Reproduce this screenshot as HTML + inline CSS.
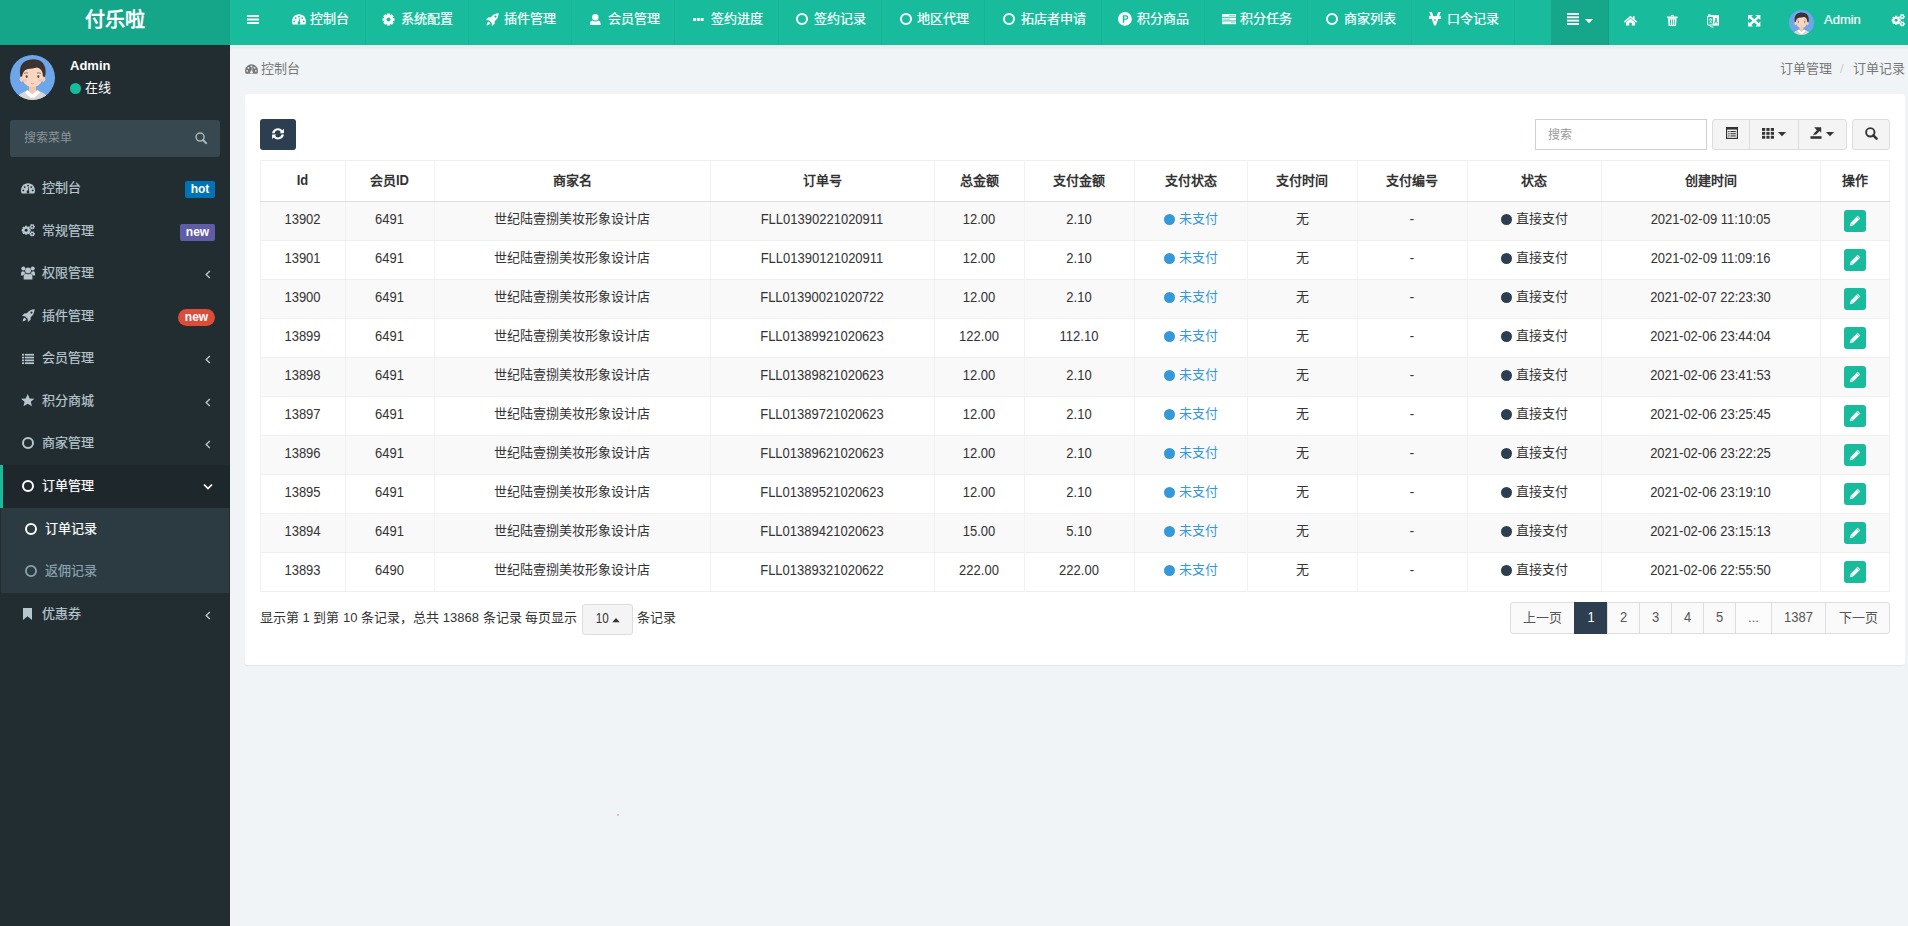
<!DOCTYPE html>
<html lang="zh-CN"><head><meta charset="utf-8"><style>
*{box-sizing:border-box;margin:0;padding:0}
html,body{width:1908px;height:926px;overflow:hidden}
body{font-family:"Liberation Sans",sans-serif;font-size:13px;color:#333;background:#f1f4f6;position:relative}
.abs{position:absolute}
svg.abs{overflow:visible}
.logo{left:0;top:0;width:230px;height:45px;color:#fff;font-size:20px;font-weight:bold;text-align:center;line-height:40px;letter-spacing:0}
.nsep{top:0;width:1px;height:45px;background:rgba(0,0,0,0.045)}
.nt{top:11px;font-size:13px;line-height:15px;color:#fff;white-space:nowrap;-webkit-text-stroke:0.2px #fff}
.st{font-size:13px;line-height:15px;color:#b8c7ce;white-space:nowrap;-webkit-text-stroke:0.2px currentColor}
.badge{height:17px;line-height:17px;font-size:12px;font-weight:bold;color:#fff;text-align:center}
.ct{font-size:13px;line-height:15px;white-space:nowrap}
.hl{left:260px;width:1630px;height:1px;background:#f0f0f0}
.vl{top:160px;width:1px;height:432px;background:#f2f2f2}
.cell{display:flex;align-items:center;justify-content:center;font-size:13px;color:#333;white-space:nowrap}
.dot{display:inline-block;width:11px;height:11px;border-radius:50%;margin-right:4px}
.sy{display:inline-block;transform:scaleY(1.08);transform-origin:50% 81%}
.syh{position:relative;top:1.2px}
.pg{display:flex;align-items:center;justify-content:center;font-size:13px;color:#555}
</style></head><body>
<div class="abs" style="left:0;top:0;width:230px;height:45px;background:#15a589"></div>
<div class="abs logo">付乐啦</div>
<div class="abs" style="left:230px;top:0;width:1678px;height:45px;background:#18bc9c"></div>
<svg class="abs" style="left:247px;top:15px;" width="12" height="9" viewBox="0 0 12 9"><g fill="#fff"><rect x="0" y="0" width="12" height="2"/><rect x="0" y="3.5" width="12" height="2"/><rect x="0" y="7" width="12" height="2"/></g></svg>
<div class="abs nsep" style="left:365px"></div>
<span class="abs nt" style="left:310px">控制台</span>
<svg class="abs" style="left:292px;top:14.3px;" width="14" height="14" viewBox="0 0 14 14"><path d="M.8 10.6 A7 7 0 1 1 13.2 10.6Z" fill="#fff"/><g fill="#18bc9c"><circle cx="2.3" cy="7.4" r=".95"/><circle cx="3.7" cy="4.1" r=".95"/><circle cx="7" cy="2.6" r=".95"/><circle cx="10.3" cy="4.1" r=".95"/><circle cx="11.7" cy="7.4" r=".95"/><circle cx="7" cy="9" r="1.4"/><path d="M6.4 9 L7.6 3.8 L8.1 3.9 L7.6 9.2Z"/></g></svg>
<div class="abs nsep" style="left:468px"></div>
<span class="abs nt" style="left:401px">系统配置</span>
<svg class="abs" style="left:382px;top:13px;" width="13" height="13" viewBox="0 0 14 14"><path d="M13.44 5.56 L13.44 8.44 L11.47 9.00 L11.58 8.75 L12.57 10.54 L10.54 12.57 L8.75 11.58 L9.00 11.47 L8.44 13.44 L5.56 13.44 L5.00 11.47 L5.25 11.58 L3.46 12.57 L1.43 10.54 L2.42 8.75 L2.53 9.00 L0.56 8.44 L0.56 5.56 L2.53 5.00 L2.42 5.25 L1.43 3.46 L3.46 1.43 L5.25 2.42 L5.00 2.53 L5.56 0.56 L8.44 0.56 L9.00 2.53 L8.75 2.42 L10.54 1.43 L12.57 3.46 L11.58 5.25 L11.47 5.00 Z" fill="#fff"/><circle cx="7" cy="7" r="2.1" fill="#18bc9c"/></svg>
<div class="abs nsep" style="left:571px"></div>
<span class="abs nt" style="left:504px">插件管理</span>
<svg class="abs" style="left:486px;top:13px;" width="13" height="13" viewBox="0 0 14 14"><path d="M13.6 .4 Q8.6 .4 5.2 4.6 L2.4 4.8 L0 7.6 L3.2 7.8 L6.2 10.8 L6.4 14 L9.2 11.6 L9.4 8.8 Q13.6 5.4 13.6 .4Z" fill="#fff"/><circle cx="10.2" cy="3.8" r="1.2" fill="#18bc9c"/><path d="M2.6 9.2 L4.8 11.4 Q3.6 13.2 .6 13.4 Q.8 10.4 2.6 9.2Z" fill="#fff"/></svg>
<div class="abs nsep" style="left:674px"></div>
<span class="abs nt" style="left:607.5px">会员管理</span>
<svg class="abs" style="left:590.4px;top:13.8px;" width="10.6" height="10.9" viewBox="0 0 10.6 10.9"><circle cx="5.3" cy="3.3" r="3.2" fill="#fff"/><path d="M0 10.9 V9.6 Q0 6.9 2.3 6.5 Q5.3 8.4 8.3 6.5 Q10.6 6.9 10.6 9.6 V10.9Z" fill="#fff"/></svg>
<div class="abs nsep" style="left:778px"></div>
<span class="abs nt" style="left:710.8px">签约进度</span>
<svg class="abs" style="left:693px;top:17.5px;" width="10.6" height="3" viewBox="0 0 10.6 3"><g fill="#fff"><rect x="0" y="0" width="3" height="3" rx=".5"/><rect x="3.8" y="0" width="3" height="3" rx=".5"/><rect x="7.6" y="0" width="3" height="3" rx=".5"/></g></svg>
<div class="abs nsep" style="left:881px"></div>
<span class="abs nt" style="left:813.8px">签约记录</span>
<svg class="abs" style="left:796px;top:12.7px;" width="12" height="12" viewBox="0 0 12 12"><circle cx="6" cy="6" r="5.0" stroke="#fff" stroke-width="2" fill="none"/></svg>
<div class="abs nsep" style="left:984px"></div>
<span class="abs nt" style="left:917.3px">地区代理</span>
<svg class="abs" style="left:899.7px;top:12.7px;" width="12" height="12" viewBox="0 0 12 12"><circle cx="6" cy="6" r="5.0" stroke="#fff" stroke-width="2" fill="none"/></svg>
<div class="abs nsep" style="left:1101px"></div>
<span class="abs nt" style="left:1020.8px">拓店者申请</span>
<svg class="abs" style="left:1003px;top:12.7px;" width="12" height="12" viewBox="0 0 12 12"><circle cx="6" cy="6" r="5.0" stroke="#fff" stroke-width="2" fill="none"/></svg>
<div class="abs nsep" style="left:1204px"></div>
<span class="abs nt" style="left:1136.7px">积分商品</span>
<svg class="abs" style="left:1118.2px;top:12.4px;" width="13.8" height="13.8" viewBox="0.5 1 13 13"><circle cx="7" cy="7.5" r="6.5" fill="#fff"/><path d="M5 4 H8 A2.2 2.2 0 0 1 8 8.4 H6.4 V11.2 H5Z M6.4 5.2 V7.2 H7.9 A1 1 0 0 0 7.9 5.2Z" fill="#18bc9c" fill-rule="evenodd"/></svg>
<div class="abs nsep" style="left:1307px"></div>
<span class="abs nt" style="left:1240px">积分任务</span>
<svg class="abs" style="left:1221.5px;top:13.8px;" width="14" height="10.2" viewBox="0 0 14 10.2"><g fill="#fff"><rect x="0" y="0" width="14" height="2.8"/><rect x="0" y="3.7" width="14" height="2.8"/><rect x="0" y="7.4" width="14" height="2.8"/></g><g fill="#18bc9c" opacity=".55"><rect x="7" y="0.9" width="6" height="1"/><rect x="1" y="4.6" width="7" height="1"/><rect x="9" y="8.3" width="4" height="1"/></g></svg>
<div class="abs nsep" style="left:1411px"></div>
<span class="abs nt" style="left:1344px">商家列表</span>
<svg class="abs" style="left:1326px;top:12.7px;" width="12" height="12" viewBox="0 0 12 12"><circle cx="6" cy="6" r="5.0" stroke="#fff" stroke-width="2" fill="none"/></svg>
<div class="abs nsep" style="left:1514px"></div>
<span class="abs nt" style="left:1447px">口令记录</span>
<svg class="abs" style="left:1429.2px;top:12.3px;" width="11.9" height="13.4" viewBox="0 0 11.9 13.4"><path d="M.3 0 H2.9 L6 9 L9.1 0 H11.7 L6.9 13.4 H5.1Z" fill="#fff"/><rect x="0" y="4.2" width="11.9" height="2.8" fill="#fff"/><circle cx="6" cy="8.2" r=".6" fill="#18bc9c"/></svg>
<div class="abs" style="left:1551px;top:0;width:58px;height:45px;background:#16a68a"></div>
<div class="abs nsep" style="left:1608px"></div>
<svg class="abs" style="left:1566px;top:13px;" width="14" height="12" viewBox="0 0 14 14"><g fill="#fff"><rect x="0" y="0" width="14" height="2.2"/><rect x="0" y="3.9" width="14" height="2.2"/><rect x="0" y="7.8" width="14" height="2.2"/><rect x="0" y="11.7" width="14" height="2.2"/></g></svg>
<svg class="abs" style="left:1585px;top:19px;" width="8" height="4.3" viewBox="0 0 8 4.3"><path d="M0 0 H8 L4 4.3Z" fill="#fff"/></svg>
<svg class="abs" style="left:1624px;top:15px;" width="13" height="10.5" viewBox="0 0 13 10.5"><path d="M6.5 .8 L-.2 6.6 L.8 7.7 L6.5 2.8 L12.2 7.7 L13.2 6.6 L10.6 4.4 V1.2 H8.9 V2.9Z" fill="#fff"/><path d="M1.9 7.4 L6.5 3.6 L11.1 7.4 V10.5 H7.8 V7.8 H5.2 V10.5 H1.9Z" fill="#fff"/></svg>
<svg class="abs" style="left:1667px;top:15px;" width="10.6" height="11" viewBox="0 0 10.6 11"><path d="M3.9 1.3 Q4.2 .2 5.3 .2 Q6.4 .2 6.7 1.3" stroke="#fff" stroke-width="1.1" fill="none"/><rect x="0" y="1.5" width="10.6" height="1.6" fill="#fff"/><path d="M1 3.3 H9.6 L9 10.9 H1.6Z" fill="#fff"/><g fill="#18bc9c"><rect x="3" y="4.5" width=".9" height="5.3"/><rect x="4.9" y="4.5" width=".9" height="5.3"/><rect x="6.8" y="4.5" width=".9" height="5.3"/></g></svg>
<svg class="abs" style="left:1706.8px;top:13.7px;" width="12.1" height="13.3" viewBox="0 0 12.1 13.3"><path d="M.6 2.4 H6.4 V11 H.6Z" fill="none" stroke="#fff" stroke-width="1"/><path d="M1.2 0 L6.6 1.4 V2.4 H1.2Z" fill="#fff"/><path d="M6 1.2 H12 V11.6 H6Z" fill="#fff"/><path d="M7.6 9.6 L9 4 L10.4 9.6 M8.1 7.8 H9.9" stroke="#18bc9c" stroke-width=".9" fill="none"/><path d="M1.8 5.2 H5.2 M3.5 4.2 V5.2 M2.2 9.4 Q4.6 7.6 4.6 5.2 M2.6 6.4 Q3.6 8.6 5.4 9.4" stroke="#fff" stroke-width=".7" fill="none"/><path d="M2.6 11.4 Q3.6 13.2 6.4 13.2" stroke="#fff" stroke-width="1" fill="none"/></svg>
<svg class="abs" style="left:1747.5px;top:14.6px;" width="12.4" height="11.5" viewBox="0 0 12.4 11.5"><g fill="#fff"><path d="M0 0 H5 L0 5Z"/><path d="M12.4 0 V5 L7.4 0Z"/><path d="M0 11.5 V6.5 L5 11.5Z"/><path d="M12.4 11.5 H7.4 L12.4 6.5Z"/></g><path d="M1.6 1.6 L10.8 9.9 M10.8 1.6 L1.6 9.9" stroke="#fff" stroke-width="2.4"/></svg>
<svg class="abs" style="left:1789px;top:10px;" width="25" height="25" viewBox="0 0 100 100"><defs><clipPath id="ac1789"><circle cx="50" cy="50" r="50"/></clipPath></defs><circle cx="50" cy="50" r="50" fill="#6ea6ea"/><g clip-path="url(#ac1789)"><path d="M14 100 Q18 84 40 79 L60 79 Q82 84 86 100Z" fill="#dbd6d1"/><path d="M38 78 L50 88 L62 78 L67 84 L54 95 L46 95 L33 84Z" fill="#fff"/><rect x="42" y="64" width="16" height="17" fill="#f1c7aa"/><path d="M43 78 L50 86 L57 78Z" fill="#f1c7aa"/><ellipse cx="26" cy="54" rx="4.5" ry="6" fill="#f4cfb4"/><ellipse cx="74" cy="54" rx="4.5" ry="6" fill="#f4cfb4"/><path d="M26 40 Q26 70 50 71 Q74 70 74 40 Q74 26 50 26 Q26 26 26 40Z" fill="#f7d7c0"/><path d="M23 48 Q17 14 46 10 Q76 7 79 34 Q80 42 77 49 L73 47 Q73 31 60 28 Q50 31 40 31 Q29 33 27 48Z" fill="#3b3331"/><path d="M31 41 Q35 39 40 40" stroke="#6b5a4d" stroke-width="1.6" fill="none"/><path d="M60 40 Q65 39 69 41" stroke="#6b5a4d" stroke-width="1.6" fill="none"/><ellipse cx="37" cy="48" rx="2.3" ry="3" fill="#5b4636"/><ellipse cx="63" cy="48" rx="2.3" ry="3" fill="#5b4636"/><ellipse cx="33" cy="56" rx="5" ry="2.8" fill="#f3b5ab" opacity=".6"/><ellipse cx="67" cy="56" rx="5" ry="2.8" fill="#f3b5ab" opacity=".6"/><path d="M47 63 Q50 65 53 63" stroke="#e7928a" stroke-width="1.8" fill="none"/></g></svg>
<span class="abs nt" style="left:1824px;top:12px">Admin</span>
<svg class="abs" style="left:1891px;top:14px;" width="14.4" height="13" viewBox="0 0 14.4 14"><path d="M9.88 5.73 L9.88 7.87 L8.41 8.23 L8.42 8.20 L9.21 9.50 L7.70 11.01 L6.40 10.22 L6.43 10.21 L6.07 11.68 L3.93 11.68 L3.57 10.21 L3.60 10.22 L2.30 11.01 L0.79 9.50 L1.58 8.20 L1.59 8.23 L0.12 7.87 L0.12 5.73 L1.59 5.37 L1.58 5.40 L0.79 4.10 L2.30 2.59 L3.60 3.38 L3.57 3.39 L3.93 1.92 L6.07 1.92 L6.43 3.39 L6.40 3.38 L7.70 2.59 L9.21 4.10 L8.42 5.40 L8.41 5.37 Z" fill="#fff"/><circle cx="5.0" cy="6.8" r="1.6" fill="#18bc9c"/><path d="M14.38 2.05 L14.38 3.75 L13.28 3.80 L13.17 3.99 L13.68 4.97 L12.20 5.82 L11.61 4.90 L11.39 4.90 L10.80 5.82 L9.32 4.97 L9.83 3.99 L9.72 3.80 L8.62 3.75 L8.62 2.05 L9.72 2.00 L9.83 1.81 L9.32 0.83 L10.80 -0.02 L11.39 0.90 L11.61 0.90 L12.20 -0.02 L13.68 0.83 L13.17 1.81 L13.28 2.00 Z" fill="#fff"/><circle cx="11.5" cy="2.9" r="0.9" fill="#18bc9c"/><path d="M14.38 9.75 L14.38 11.45 L13.28 11.50 L13.17 11.69 L13.68 12.67 L12.20 13.52 L11.61 12.60 L11.39 12.60 L10.80 13.52 L9.32 12.67 L9.83 11.69 L9.72 11.50 L8.62 11.45 L8.62 9.75 L9.72 9.70 L9.83 9.51 L9.32 8.53 L10.80 7.68 L11.39 8.60 L11.61 8.60 L12.20 7.68 L13.68 8.53 L13.17 9.51 L13.28 9.70 Z" fill="#fff"/><circle cx="11.5" cy="10.6" r="0.9" fill="#18bc9c"/></svg>
<div class="abs" style="left:0;top:45px;width:230px;height:881px;background:#222d32"></div>
<svg class="abs" style="left:10px;top:55px;" width="45" height="45" viewBox="0 0 100 100"><defs><clipPath id="ac10"><circle cx="50" cy="50" r="50"/></clipPath></defs><circle cx="50" cy="50" r="50" fill="#6ea6ea"/><g clip-path="url(#ac10)"><path d="M14 100 Q18 84 40 79 L60 79 Q82 84 86 100Z" fill="#dbd6d1"/><path d="M38 78 L50 88 L62 78 L67 84 L54 95 L46 95 L33 84Z" fill="#fff"/><rect x="42" y="64" width="16" height="17" fill="#f1c7aa"/><path d="M43 78 L50 86 L57 78Z" fill="#f1c7aa"/><ellipse cx="26" cy="54" rx="4.5" ry="6" fill="#f4cfb4"/><ellipse cx="74" cy="54" rx="4.5" ry="6" fill="#f4cfb4"/><path d="M26 40 Q26 70 50 71 Q74 70 74 40 Q74 26 50 26 Q26 26 26 40Z" fill="#f7d7c0"/><path d="M23 48 Q17 14 46 10 Q76 7 79 34 Q80 42 77 49 L73 47 Q73 31 60 28 Q50 31 40 31 Q29 33 27 48Z" fill="#3b3331"/><path d="M31 41 Q35 39 40 40" stroke="#6b5a4d" stroke-width="1.6" fill="none"/><path d="M60 40 Q65 39 69 41" stroke="#6b5a4d" stroke-width="1.6" fill="none"/><ellipse cx="37" cy="48" rx="2.3" ry="3" fill="#5b4636"/><ellipse cx="63" cy="48" rx="2.3" ry="3" fill="#5b4636"/><ellipse cx="33" cy="56" rx="5" ry="2.8" fill="#f3b5ab" opacity=".6"/><ellipse cx="67" cy="56" rx="5" ry="2.8" fill="#f3b5ab" opacity=".6"/><path d="M47 63 Q50 65 53 63" stroke="#e7928a" stroke-width="1.8" fill="none"/></g></svg>
<span class="abs" style="left:70px;top:58px;font-size:13px;font-weight:bold;color:#fff;line-height:16px">Admin</span>
<div class="abs" style="left:70px;top:83px;width:11px;height:11px;border-radius:50%;background:#18bc9c"></div>
<span class="abs" style="left:85px;top:80px;font-size:13px;color:#fff;line-height:15px">在线</span>
<div class="abs" style="left:10px;top:120px;width:210px;height:36.5px;background:#374850;border-radius:3px"></div>
<span class="abs" style="left:24px;top:131px;font-size:12px;color:#8a9499;line-height:14px">搜索菜单</span>
<svg class="abs" style="left:194.5px;top:132px;" width="12" height="12" viewBox="0 0 12.5 12.5"><circle cx="5.3" cy="5.3" r="4.2" stroke="#b0b8bc" stroke-width="1.5" fill="none"/><path d="M8.3 8.3 L11.6 11.6" stroke="#b0b8bc" stroke-width="2.1" stroke-linecap="round"/></svg>
<span class="abs st" style="left:42px;top:180px">控制台</span>
<svg class="abs" style="left:21.2px;top:182.6px;" width="14" height="14" viewBox="0 0 14 14"><path d="M.8 10.6 A7 7 0 1 1 13.2 10.6Z" fill="#b8c7ce"/><g fill="#222d32"><circle cx="2.3" cy="7.4" r=".95"/><circle cx="3.7" cy="4.1" r=".95"/><circle cx="7" cy="2.6" r=".95"/><circle cx="10.3" cy="4.1" r=".95"/><circle cx="11.7" cy="7.4" r=".95"/><circle cx="7" cy="9" r="1.4"/><path d="M6.4 9 L7.6 3.8 L8.1 3.9 L7.6 9.2Z"/></g></svg>
<span class="abs badge" style="left:185px;top:181px;width:30px;background:#0073b7;border-radius:2px">hot</span>
<span class="abs st" style="left:42px;top:222.6px">常规管理</span>
<svg class="abs" style="left:21px;top:223.6px;" width="14.4" height="13" viewBox="0 0 14.4 14"><path d="M9.88 5.73 L9.88 7.87 L8.41 8.23 L8.42 8.20 L9.21 9.50 L7.70 11.01 L6.40 10.22 L6.43 10.21 L6.07 11.68 L3.93 11.68 L3.57 10.21 L3.60 10.22 L2.30 11.01 L0.79 9.50 L1.58 8.20 L1.59 8.23 L0.12 7.87 L0.12 5.73 L1.59 5.37 L1.58 5.40 L0.79 4.10 L2.30 2.59 L3.60 3.38 L3.57 3.39 L3.93 1.92 L6.07 1.92 L6.43 3.39 L6.40 3.38 L7.70 2.59 L9.21 4.10 L8.42 5.40 L8.41 5.37 Z" fill="#b8c7ce"/><circle cx="5.0" cy="6.8" r="1.6" fill="#222d32"/><path d="M14.38 2.05 L14.38 3.75 L13.28 3.80 L13.17 3.99 L13.68 4.97 L12.20 5.82 L11.61 4.90 L11.39 4.90 L10.80 5.82 L9.32 4.97 L9.83 3.99 L9.72 3.80 L8.62 3.75 L8.62 2.05 L9.72 2.00 L9.83 1.81 L9.32 0.83 L10.80 -0.02 L11.39 0.90 L11.61 0.90 L12.20 -0.02 L13.68 0.83 L13.17 1.81 L13.28 2.00 Z" fill="#b8c7ce"/><circle cx="11.5" cy="2.9" r="0.9" fill="#222d32"/><path d="M14.38 9.75 L14.38 11.45 L13.28 11.50 L13.17 11.69 L13.68 12.67 L12.20 13.52 L11.61 12.60 L11.39 12.60 L10.80 13.52 L9.32 12.67 L9.83 11.69 L9.72 11.50 L8.62 11.45 L8.62 9.75 L9.72 9.70 L9.83 9.51 L9.32 8.53 L10.80 7.68 L11.39 8.60 L11.61 8.60 L12.20 7.68 L13.68 8.53 L13.17 9.51 L13.28 9.70 Z" fill="#b8c7ce"/><circle cx="11.5" cy="10.6" r="0.9" fill="#222d32"/></svg>
<span class="abs badge" style="left:180px;top:224.1px;width:35px;background:#605ca8;border-radius:2px">new</span>
<span class="abs st" style="left:42px;top:265.1px">权限管理</span>
<svg class="abs" style="left:20.7px;top:265.5px;" width="14.1" height="13.5" viewBox="0 0 14 13.5"><g fill="#b8c7ce"><circle cx="7" cy="4.4" r="2.9"/><path d="M2.6 13.5 V11 Q2.6 7.8 5.4 7.8 Q7 8.8 8.6 7.8 Q11.4 7.8 11.4 11 V13.5Z"/><circle cx="2.3" cy="2.4" r="2"/><path d="M0 9.6 V7.4 Q0 5.2 1.6 5.2 Q2.4 5.8 3.4 5.4 Q3.6 7 4.6 7.6 Q2.6 8 2.2 9.6Z"/><circle cx="11.7" cy="2.4" r="2"/><path d="M14 9.6 V7.4 Q14 5.2 12.4 5.2 Q11.6 5.8 10.6 5.4 Q10.4 7 9.4 7.6 Q11.4 8 11.8 9.6Z"/></g></svg>
<svg class="abs" style="left:205px;top:269.9px;" width="6" height="9" viewBox="0 0 6 9"><path d="M4.8 1 L1.2 4.5 L4.8 8" stroke="#b8c7ce" stroke-width="1.4" fill="none"/></svg>
<span class="abs st" style="left:42px;top:307.7px">插件管理</span>
<svg class="abs" style="left:21.5px;top:309.2px;" width="13" height="13" viewBox="0 0 14 14"><path d="M13.6 .4 Q8.6 .4 5.2 4.6 L2.4 4.8 L0 7.6 L3.2 7.8 L6.2 10.8 L6.4 14 L9.2 11.6 L9.4 8.8 Q13.6 5.4 13.6 .4Z" fill="#b8c7ce"/><circle cx="10.2" cy="3.8" r="1.2" fill="#222d32"/><path d="M2.6 9.2 L4.8 11.4 Q3.6 13.2 .6 13.4 Q.8 10.4 2.6 9.2Z" fill="#b8c7ce"/></svg>
<span class="abs badge" style="left:178px;top:309.2px;width:37px;background:#dd4b39;border-radius:9px">new</span>
<span class="abs st" style="left:42px;top:350.3px">会员管理</span>
<svg class="abs" style="left:21px;top:353.3px;" width="14" height="12" viewBox="0 0 14 14"><g fill="#b8c7ce"><rect x="0" y="1" width="2.4" height="2"/><rect x="3.4" y="1" width="10.6" height="2"/><rect x="0" y="4.3" width="2.4" height="2"/><rect x="3.4" y="4.3" width="10.6" height="2"/><rect x="0" y="7.6" width="2.4" height="2"/><rect x="3.4" y="7.6" width="10.6" height="2"/><rect x="0" y="10.9" width="2.4" height="2"/><rect x="3.4" y="10.9" width="10.6" height="2"/></g></svg>
<svg class="abs" style="left:205px;top:355.1px;" width="6" height="9" viewBox="0 0 6 9"><path d="M4.8 1 L1.2 4.5 L4.8 8" stroke="#b8c7ce" stroke-width="1.4" fill="none"/></svg>
<span class="abs st" style="left:42px;top:392.9px">积分商城</span>
<svg preserveAspectRatio="none" class="abs" style="left:21.3px;top:393.8px;" width="13.4" height="12.3" viewBox="0.5 0.5 13 12.3"><path d="M7 .5 L8.9 4.9 L13.5 5.2 L10 8.2 L11.1 12.8 L7 10.3 L2.9 12.8 L4 8.2 L.5 5.2 L5.1 4.9Z" fill="#b8c7ce"/></svg>
<svg class="abs" style="left:205px;top:397.7px;" width="6" height="9" viewBox="0 0 6 9"><path d="M4.8 1 L1.2 4.5 L4.8 8" stroke="#b8c7ce" stroke-width="1.4" fill="none"/></svg>
<span class="abs st" style="left:42px;top:435.4px">商家管理</span>
<svg class="abs" style="left:22px;top:437.4px;" width="12" height="12" viewBox="0 0 12 12"><circle cx="6" cy="6" r="5.0" stroke="#b8c7ce" stroke-width="2" fill="none"/></svg>
<svg class="abs" style="left:205px;top:440.2px;" width="6" height="9" viewBox="0 0 6 9"><path d="M4.8 1 L1.2 4.5 L4.8 8" stroke="#b8c7ce" stroke-width="1.4" fill="none"/></svg>
<div class="abs" style="left:0;top:464.5px;width:230px;height:43px;background:#1e282c"></div>
<div class="abs" style="left:0;top:464.5px;width:3px;height:43px;background:#18bc9c"></div>
<span class="abs st" style="left:42px;top:478px;color:#fff">订单管理</span>
<svg class="abs" style="left:22px;top:479.5px;" width="12" height="12" viewBox="0 0 12 12"><circle cx="6" cy="6" r="5.0" stroke="#fff" stroke-width="2" fill="none"/></svg>
<svg class="abs" style="left:203px;top:483px;" width="10" height="7" viewBox="0 0 10 7"><path d="M1 1.5 L5 5.5 L9 1.5" stroke="#fff" stroke-width="1.7" fill="none"/></svg>
<div class="abs" style="left:1px;top:507.5px;width:228px;height:85px;background:#2c3b41"></div>
<span class="abs st" style="left:45px;top:521px;color:#fff">订单记录</span>
<svg class="abs" style="left:25px;top:522.5px;" width="12" height="12" viewBox="0 0 12 12"><circle cx="6" cy="6" r="5.0" stroke="#fff" stroke-width="2" fill="none"/></svg>
<span class="abs st" style="left:45px;top:563px;color:#8aa4af">返佣记录</span>
<svg class="abs" style="left:25px;top:564.5px;" width="12" height="12" viewBox="0 0 12 12"><circle cx="6" cy="6" r="5.1" stroke="#8aa4af" stroke-width="1.8" fill="none"/></svg>
<span class="abs st" style="left:42px;top:606px">优惠券</span>
<svg class="abs" style="left:23px;top:608px;" width="9" height="12" viewBox="0 0 9 12"><path d="M0 0 H9 V12 L4.5 8.3 L0 12Z" fill="#b8c7ce"/></svg>
<svg class="abs" style="left:205px;top:611.3px;" width="6" height="9" viewBox="0 0 6 9"><path d="M4.8 1 L1.2 4.5 L4.8 8" stroke="#b8c7ce" stroke-width="1.4" fill="none"/></svg>
<div class="abs" style="left:230px;top:45px;width:1678px;height:881px;background:#f1f4f6"></div>
<div class="abs" style="left:230px;top:45px;width:1678px;height:5px;background:linear-gradient(rgba(0,0,0,0.05),rgba(0,0,0,0))"></div>
<svg class="abs" style="left:245px;top:63.8px;" width="13" height="13" viewBox="0 0 14 14"><path d="M.8 10.6 A7 7 0 1 1 13.2 10.6Z" fill="#777"/><g fill="#f1f4f6"><circle cx="2.3" cy="7.4" r=".95"/><circle cx="3.7" cy="4.1" r=".95"/><circle cx="7" cy="2.6" r=".95"/><circle cx="10.3" cy="4.1" r=".95"/><circle cx="11.7" cy="7.4" r=".95"/><circle cx="7" cy="9" r="1.4"/><path d="M6.4 9 L7.6 3.8 L8.1 3.9 L7.6 9.2Z"/></g></svg>
<span class="abs ct" style="left:261px;top:61px;color:#777">控制台</span>
<span class="abs ct" style="left:1780px;top:61px;color:#777">订单管理</span>
<span class="abs ct" style="left:1840px;top:61px;color:#ccc">/</span>
<span class="abs ct" style="left:1853px;top:61px;color:#777">订单记录</span>
<div class="abs" style="left:245px;top:94px;width:1660px;height:571px;background:#fff;border-radius:3px;box-shadow:0 1px 1px rgba(0,0,0,0.06)"></div>
<div class="abs" style="left:260px;top:119px;width:36px;height:31px;background:#2c3e50;border-radius:3px"></div>
<svg class="abs" style="left:272.3px;top:127.7px;" width="12" height="11.7" viewBox="0 0 12 11.7"><path d="M0.1 5.3 A5.9 5.9 0 0 1 10.3 2.3 L11.9 0.8 V5.3 H7.5 L8.9 3.9 A3.4 3.4 0 0 0 2.6 5.3Z" fill="#fff"/><path d="M0.1 5.3 A5.9 5.9 0 0 1 10.3 2.3 L11.9 0.8 V5.3 H7.5 L8.9 3.9 A3.4 3.4 0 0 0 2.6 5.3Z" fill="#fff" transform="rotate(180 6 5.85)"/></svg>
<div class="abs" style="left:1535px;top:119px;width:172px;height:31px;border:1px solid #ccd0d6;background:#fff"></div>
<span class="abs" style="left:1548px;top:127.5px;font-size:12px;line-height:14px;color:#999">搜索</span>
<div class="abs" style="left:1712px;top:119px;width:135px;height:31px;border:1px solid #ddd;background:#f4f4f4;border-radius:3px"></div>
<div class="abs" style="left:1749px;top:119px;width:1px;height:31px;background:#ddd"></div>
<div class="abs" style="left:1798px;top:119px;width:1px;height:31px;background:#ddd"></div>
<div class="abs" style="left:1852px;top:119px;width:38px;height:31px;border:1px solid #ddd;background:#f4f4f4;border-radius:3px"></div>
<svg class="abs" style="left:1726px;top:127px;" width="12" height="12" viewBox="0 0 12 12"><rect x=".6" y=".6" width="10.8" height="10.8" fill="none" stroke="#333" stroke-width="1.2"/><rect x=".6" y=".6" width="10.8" height="2" fill="#333"/><g fill="#333"><rect x="2.2" y="4" width="1.4" height="1.1"/><rect x="4.4" y="4" width="5.4" height="1.1"/><rect x="2.2" y="6.2" width="1.4" height="1.1"/><rect x="4.4" y="6.2" width="5.4" height="1.1"/><rect x="2.2" y="8.4" width="1.4" height="1.1"/><rect x="4.4" y="8.4" width="5.4" height="1.1"/></g></svg>
<svg class="abs" style="left:1762px;top:128px;" width="12.2" height="10.8" viewBox="0 0 12.2 10.8"><g fill="#333"><rect x="0.0" y="0.0" width="3.2" height="2.9"/><rect x="0.0" y="3.9" width="3.2" height="2.9"/><rect x="0.0" y="7.8" width="3.2" height="2.9"/><rect x="4.4" y="0.0" width="3.2" height="2.9"/><rect x="4.4" y="3.9" width="3.2" height="2.9"/><rect x="4.4" y="7.8" width="3.2" height="2.9"/><rect x="8.8" y="0.0" width="3.2" height="2.9"/><rect x="8.8" y="3.9" width="3.2" height="2.9"/><rect x="8.8" y="7.8" width="3.2" height="2.9"/></g></svg>
<svg class="abs" style="left:1778px;top:131.8px;" width="8" height="4.3" viewBox="0 0 8 4.3"><path d="M0 0 H8 L4 4.3Z" fill="#333"/></svg>
<svg class="abs" style="left:1810.4px;top:127px;" width="12" height="12" viewBox="0 0 12 12"><rect x=".5" y="9.2" width="11" height="2.6" fill="#333"/><path d="M5.2 .3 H10.6 V5.7 L9 4.1 L5.6 7.5 Q4.3 7.3 2.4 8.6 Q3.3 5.7 6.3 3.2 L3.6 .3Z" fill="#333" transform="translate(.6 0)"/></svg>
<svg class="abs" style="left:1826.2px;top:131.8px;" width="8" height="4.3" viewBox="0 0 8 4.3"><path d="M0 0 H8 L4 4.3Z" fill="#333"/></svg>
<svg class="abs" style="left:1865px;top:127px;" width="12.5" height="12.5" viewBox="0 0 12.5 12.5"><circle cx="5.3" cy="5.3" r="4.2" stroke="#333" stroke-width="1.9" fill="none"/><path d="M8.3 8.3 L11.6 11.6" stroke="#333" stroke-width="2.5" stroke-linecap="round"/></svg>
<div class="abs" style="left:260px;top:201px;width:1630px;height:40px;background:#f9f9f9"></div>
<div class="abs" style="left:260px;top:279px;width:1630px;height:40px;background:#f9f9f9"></div>
<div class="abs" style="left:260px;top:357px;width:1630px;height:40px;background:#f9f9f9"></div>
<div class="abs" style="left:260px;top:435px;width:1630px;height:40px;background:#f9f9f9"></div>
<div class="abs" style="left:260px;top:513px;width:1630px;height:40px;background:#f9f9f9"></div>
<div class="abs hl" style="top:160px"></div>
<div class="abs vl" style="left:260px"></div>
<div class="abs vl" style="left:345px"></div>
<div class="abs vl" style="left:434px"></div>
<div class="abs vl" style="left:710px"></div>
<div class="abs vl" style="left:934px"></div>
<div class="abs vl" style="left:1024px"></div>
<div class="abs vl" style="left:1134px"></div>
<div class="abs vl" style="left:1247px"></div>
<div class="abs vl" style="left:1357px"></div>
<div class="abs vl" style="left:1467px"></div>
<div class="abs vl" style="left:1601px"></div>
<div class="abs vl" style="left:1820px"></div>
<div class="abs vl" style="left:1889px"></div>
<div class="abs hl" style="top:240px"></div>
<div class="abs hl" style="top:279px"></div>
<div class="abs hl" style="top:318px"></div>
<div class="abs hl" style="top:357px"></div>
<div class="abs hl" style="top:396px"></div>
<div class="abs hl" style="top:435px"></div>
<div class="abs hl" style="top:474px"></div>
<div class="abs hl" style="top:513px"></div>
<div class="abs hl" style="top:552px"></div>
<div class="abs hl" style="top:591px"></div>
<div class="abs" style="left:260px;top:201px;width:1630px;height:1px;background:#dedede"></div>
<div class="abs cell" style="left:260px;top:159.5px;width:85px;height:40px;font-weight:bold"><span class="sy syh">Id</span></div>
<div class="abs cell" style="left:345px;top:159.5px;width:89px;height:40px;font-weight:bold">会员<span class="sy syh">ID</span></div>
<div class="abs cell" style="left:434px;top:159.5px;width:276px;height:40px;font-weight:bold">商家名</div>
<div class="abs cell" style="left:710px;top:159.5px;width:224px;height:40px;font-weight:bold">订单号</div>
<div class="abs cell" style="left:934px;top:159.5px;width:90px;height:40px;font-weight:bold">总金额</div>
<div class="abs cell" style="left:1024px;top:159.5px;width:110px;height:40px;font-weight:bold">支付金额</div>
<div class="abs cell" style="left:1134px;top:159.5px;width:113px;height:40px;font-weight:bold">支付状态</div>
<div class="abs cell" style="left:1247px;top:159.5px;width:110px;height:40px;font-weight:bold">支付时间</div>
<div class="abs cell" style="left:1357px;top:159.5px;width:110px;height:40px;font-weight:bold">支付编号</div>
<div class="abs cell" style="left:1467px;top:159.5px;width:134px;height:40px;font-weight:bold">状态</div>
<div class="abs cell" style="left:1601px;top:159.5px;width:219px;height:40px;font-weight:bold">创建时间</div>
<div class="abs cell" style="left:1820px;top:159.5px;width:69px;height:40px;font-weight:bold">操作</div>
<div class="abs cell" style="left:260px;top:199.5px;width:85px;height:39px;"><span class="sy">13902</span></div>
<div class="abs cell" style="left:345px;top:199.5px;width:89px;height:39px;"><span class="sy">6491</span></div>
<div class="abs cell" style="left:434px;top:197.5px;width:276px;height:39px;">世纪陆壹捌美妆形象设计店</div>
<div class="abs cell" style="left:710px;top:199.5px;width:224px;height:39px;"><span class="sy">FLL01390221020911</span></div>
<div class="abs cell" style="left:934px;top:199.5px;width:90px;height:39px;"><span class="sy">12.00</span></div>
<div class="abs cell" style="left:1024px;top:199.5px;width:110px;height:39px;"><span class="sy">2.10</span></div>
<div class="abs cell" style="left:1247px;top:197.5px;width:110px;height:39px;">无</div>
<div class="abs cell" style="left:1357px;top:199.5px;width:110px;height:39px;"><span class="sy">-</span></div>
<div class="abs cell" style="left:1601px;top:199.5px;width:219px;height:39px;"><span class="sy">2021-02-09 11:10:05</span></div>
<div class="abs cell" style="left:1134px;top:199.5px;width:113px;height:39px;"><span class="dot" style="background:#3498db"></span><span style="color:#3498db;position:relative;top:-2px">未支付</span></div>
<div class="abs cell" style="left:1467px;top:199.5px;width:134px;height:39px;"><span class="dot" style="background:#2c3e50"></span><span style="position:relative;top:-2px">直接支付</span></div>
<div class="abs" style="left:1844px;top:210px;width:22px;height:22px;background:#18bc9c;border-radius:3px"></div>
<svg class="abs" style="left:1849px;top:215px;" width="12" height="12" viewBox="0 0 13 13"><path d="M9.3 .8 L12.2 3.7 L4.4 11.5 L.9 12.3 L1.6 8.7Z" fill="#fff"/><path d="M1.9 9 L3.9 11" stroke="#18bc9c" stroke-width=".7"/><path d="M8.2 1.9 L11.1 4.8" stroke="#18bc9c" stroke-width=".8"/></svg>
<div class="abs cell" style="left:260px;top:238.5px;width:85px;height:39px;"><span class="sy">13901</span></div>
<div class="abs cell" style="left:345px;top:238.5px;width:89px;height:39px;"><span class="sy">6491</span></div>
<div class="abs cell" style="left:434px;top:236.5px;width:276px;height:39px;">世纪陆壹捌美妆形象设计店</div>
<div class="abs cell" style="left:710px;top:238.5px;width:224px;height:39px;"><span class="sy">FLL01390121020911</span></div>
<div class="abs cell" style="left:934px;top:238.5px;width:90px;height:39px;"><span class="sy">12.00</span></div>
<div class="abs cell" style="left:1024px;top:238.5px;width:110px;height:39px;"><span class="sy">2.10</span></div>
<div class="abs cell" style="left:1247px;top:236.5px;width:110px;height:39px;">无</div>
<div class="abs cell" style="left:1357px;top:238.5px;width:110px;height:39px;"><span class="sy">-</span></div>
<div class="abs cell" style="left:1601px;top:238.5px;width:219px;height:39px;"><span class="sy">2021-02-09 11:09:16</span></div>
<div class="abs cell" style="left:1134px;top:238.5px;width:113px;height:39px;"><span class="dot" style="background:#3498db"></span><span style="color:#3498db;position:relative;top:-2px">未支付</span></div>
<div class="abs cell" style="left:1467px;top:238.5px;width:134px;height:39px;"><span class="dot" style="background:#2c3e50"></span><span style="position:relative;top:-2px">直接支付</span></div>
<div class="abs" style="left:1844px;top:249px;width:22px;height:22px;background:#18bc9c;border-radius:3px"></div>
<svg class="abs" style="left:1849px;top:254px;" width="12" height="12" viewBox="0 0 13 13"><path d="M9.3 .8 L12.2 3.7 L4.4 11.5 L.9 12.3 L1.6 8.7Z" fill="#fff"/><path d="M1.9 9 L3.9 11" stroke="#18bc9c" stroke-width=".7"/><path d="M8.2 1.9 L11.1 4.8" stroke="#18bc9c" stroke-width=".8"/></svg>
<div class="abs cell" style="left:260px;top:277.5px;width:85px;height:39px;"><span class="sy">13900</span></div>
<div class="abs cell" style="left:345px;top:277.5px;width:89px;height:39px;"><span class="sy">6491</span></div>
<div class="abs cell" style="left:434px;top:275.5px;width:276px;height:39px;">世纪陆壹捌美妆形象设计店</div>
<div class="abs cell" style="left:710px;top:277.5px;width:224px;height:39px;"><span class="sy">FLL01390021020722</span></div>
<div class="abs cell" style="left:934px;top:277.5px;width:90px;height:39px;"><span class="sy">12.00</span></div>
<div class="abs cell" style="left:1024px;top:277.5px;width:110px;height:39px;"><span class="sy">2.10</span></div>
<div class="abs cell" style="left:1247px;top:275.5px;width:110px;height:39px;">无</div>
<div class="abs cell" style="left:1357px;top:277.5px;width:110px;height:39px;"><span class="sy">-</span></div>
<div class="abs cell" style="left:1601px;top:277.5px;width:219px;height:39px;"><span class="sy">2021-02-07 22:23:30</span></div>
<div class="abs cell" style="left:1134px;top:277.5px;width:113px;height:39px;"><span class="dot" style="background:#3498db"></span><span style="color:#3498db;position:relative;top:-2px">未支付</span></div>
<div class="abs cell" style="left:1467px;top:277.5px;width:134px;height:39px;"><span class="dot" style="background:#2c3e50"></span><span style="position:relative;top:-2px">直接支付</span></div>
<div class="abs" style="left:1844px;top:288px;width:22px;height:22px;background:#18bc9c;border-radius:3px"></div>
<svg class="abs" style="left:1849px;top:293px;" width="12" height="12" viewBox="0 0 13 13"><path d="M9.3 .8 L12.2 3.7 L4.4 11.5 L.9 12.3 L1.6 8.7Z" fill="#fff"/><path d="M1.9 9 L3.9 11" stroke="#18bc9c" stroke-width=".7"/><path d="M8.2 1.9 L11.1 4.8" stroke="#18bc9c" stroke-width=".8"/></svg>
<div class="abs cell" style="left:260px;top:316.5px;width:85px;height:39px;"><span class="sy">13899</span></div>
<div class="abs cell" style="left:345px;top:316.5px;width:89px;height:39px;"><span class="sy">6491</span></div>
<div class="abs cell" style="left:434px;top:314.5px;width:276px;height:39px;">世纪陆壹捌美妆形象设计店</div>
<div class="abs cell" style="left:710px;top:316.5px;width:224px;height:39px;"><span class="sy">FLL01389921020623</span></div>
<div class="abs cell" style="left:934px;top:316.5px;width:90px;height:39px;"><span class="sy">122.00</span></div>
<div class="abs cell" style="left:1024px;top:316.5px;width:110px;height:39px;"><span class="sy">112.10</span></div>
<div class="abs cell" style="left:1247px;top:314.5px;width:110px;height:39px;">无</div>
<div class="abs cell" style="left:1357px;top:316.5px;width:110px;height:39px;"><span class="sy">-</span></div>
<div class="abs cell" style="left:1601px;top:316.5px;width:219px;height:39px;"><span class="sy">2021-02-06 23:44:04</span></div>
<div class="abs cell" style="left:1134px;top:316.5px;width:113px;height:39px;"><span class="dot" style="background:#3498db"></span><span style="color:#3498db;position:relative;top:-2px">未支付</span></div>
<div class="abs cell" style="left:1467px;top:316.5px;width:134px;height:39px;"><span class="dot" style="background:#2c3e50"></span><span style="position:relative;top:-2px">直接支付</span></div>
<div class="abs" style="left:1844px;top:327px;width:22px;height:22px;background:#18bc9c;border-radius:3px"></div>
<svg class="abs" style="left:1849px;top:332px;" width="12" height="12" viewBox="0 0 13 13"><path d="M9.3 .8 L12.2 3.7 L4.4 11.5 L.9 12.3 L1.6 8.7Z" fill="#fff"/><path d="M1.9 9 L3.9 11" stroke="#18bc9c" stroke-width=".7"/><path d="M8.2 1.9 L11.1 4.8" stroke="#18bc9c" stroke-width=".8"/></svg>
<div class="abs cell" style="left:260px;top:355.5px;width:85px;height:39px;"><span class="sy">13898</span></div>
<div class="abs cell" style="left:345px;top:355.5px;width:89px;height:39px;"><span class="sy">6491</span></div>
<div class="abs cell" style="left:434px;top:353.5px;width:276px;height:39px;">世纪陆壹捌美妆形象设计店</div>
<div class="abs cell" style="left:710px;top:355.5px;width:224px;height:39px;"><span class="sy">FLL01389821020623</span></div>
<div class="abs cell" style="left:934px;top:355.5px;width:90px;height:39px;"><span class="sy">12.00</span></div>
<div class="abs cell" style="left:1024px;top:355.5px;width:110px;height:39px;"><span class="sy">2.10</span></div>
<div class="abs cell" style="left:1247px;top:353.5px;width:110px;height:39px;">无</div>
<div class="abs cell" style="left:1357px;top:355.5px;width:110px;height:39px;"><span class="sy">-</span></div>
<div class="abs cell" style="left:1601px;top:355.5px;width:219px;height:39px;"><span class="sy">2021-02-06 23:41:53</span></div>
<div class="abs cell" style="left:1134px;top:355.5px;width:113px;height:39px;"><span class="dot" style="background:#3498db"></span><span style="color:#3498db;position:relative;top:-2px">未支付</span></div>
<div class="abs cell" style="left:1467px;top:355.5px;width:134px;height:39px;"><span class="dot" style="background:#2c3e50"></span><span style="position:relative;top:-2px">直接支付</span></div>
<div class="abs" style="left:1844px;top:366px;width:22px;height:22px;background:#18bc9c;border-radius:3px"></div>
<svg class="abs" style="left:1849px;top:371px;" width="12" height="12" viewBox="0 0 13 13"><path d="M9.3 .8 L12.2 3.7 L4.4 11.5 L.9 12.3 L1.6 8.7Z" fill="#fff"/><path d="M1.9 9 L3.9 11" stroke="#18bc9c" stroke-width=".7"/><path d="M8.2 1.9 L11.1 4.8" stroke="#18bc9c" stroke-width=".8"/></svg>
<div class="abs cell" style="left:260px;top:394.5px;width:85px;height:39px;"><span class="sy">13897</span></div>
<div class="abs cell" style="left:345px;top:394.5px;width:89px;height:39px;"><span class="sy">6491</span></div>
<div class="abs cell" style="left:434px;top:392.5px;width:276px;height:39px;">世纪陆壹捌美妆形象设计店</div>
<div class="abs cell" style="left:710px;top:394.5px;width:224px;height:39px;"><span class="sy">FLL01389721020623</span></div>
<div class="abs cell" style="left:934px;top:394.5px;width:90px;height:39px;"><span class="sy">12.00</span></div>
<div class="abs cell" style="left:1024px;top:394.5px;width:110px;height:39px;"><span class="sy">2.10</span></div>
<div class="abs cell" style="left:1247px;top:392.5px;width:110px;height:39px;">无</div>
<div class="abs cell" style="left:1357px;top:394.5px;width:110px;height:39px;"><span class="sy">-</span></div>
<div class="abs cell" style="left:1601px;top:394.5px;width:219px;height:39px;"><span class="sy">2021-02-06 23:25:45</span></div>
<div class="abs cell" style="left:1134px;top:394.5px;width:113px;height:39px;"><span class="dot" style="background:#3498db"></span><span style="color:#3498db;position:relative;top:-2px">未支付</span></div>
<div class="abs cell" style="left:1467px;top:394.5px;width:134px;height:39px;"><span class="dot" style="background:#2c3e50"></span><span style="position:relative;top:-2px">直接支付</span></div>
<div class="abs" style="left:1844px;top:405px;width:22px;height:22px;background:#18bc9c;border-radius:3px"></div>
<svg class="abs" style="left:1849px;top:410px;" width="12" height="12" viewBox="0 0 13 13"><path d="M9.3 .8 L12.2 3.7 L4.4 11.5 L.9 12.3 L1.6 8.7Z" fill="#fff"/><path d="M1.9 9 L3.9 11" stroke="#18bc9c" stroke-width=".7"/><path d="M8.2 1.9 L11.1 4.8" stroke="#18bc9c" stroke-width=".8"/></svg>
<div class="abs cell" style="left:260px;top:433.5px;width:85px;height:39px;"><span class="sy">13896</span></div>
<div class="abs cell" style="left:345px;top:433.5px;width:89px;height:39px;"><span class="sy">6491</span></div>
<div class="abs cell" style="left:434px;top:431.5px;width:276px;height:39px;">世纪陆壹捌美妆形象设计店</div>
<div class="abs cell" style="left:710px;top:433.5px;width:224px;height:39px;"><span class="sy">FLL01389621020623</span></div>
<div class="abs cell" style="left:934px;top:433.5px;width:90px;height:39px;"><span class="sy">12.00</span></div>
<div class="abs cell" style="left:1024px;top:433.5px;width:110px;height:39px;"><span class="sy">2.10</span></div>
<div class="abs cell" style="left:1247px;top:431.5px;width:110px;height:39px;">无</div>
<div class="abs cell" style="left:1357px;top:433.5px;width:110px;height:39px;"><span class="sy">-</span></div>
<div class="abs cell" style="left:1601px;top:433.5px;width:219px;height:39px;"><span class="sy">2021-02-06 23:22:25</span></div>
<div class="abs cell" style="left:1134px;top:433.5px;width:113px;height:39px;"><span class="dot" style="background:#3498db"></span><span style="color:#3498db;position:relative;top:-2px">未支付</span></div>
<div class="abs cell" style="left:1467px;top:433.5px;width:134px;height:39px;"><span class="dot" style="background:#2c3e50"></span><span style="position:relative;top:-2px">直接支付</span></div>
<div class="abs" style="left:1844px;top:444px;width:22px;height:22px;background:#18bc9c;border-radius:3px"></div>
<svg class="abs" style="left:1849px;top:449px;" width="12" height="12" viewBox="0 0 13 13"><path d="M9.3 .8 L12.2 3.7 L4.4 11.5 L.9 12.3 L1.6 8.7Z" fill="#fff"/><path d="M1.9 9 L3.9 11" stroke="#18bc9c" stroke-width=".7"/><path d="M8.2 1.9 L11.1 4.8" stroke="#18bc9c" stroke-width=".8"/></svg>
<div class="abs cell" style="left:260px;top:472.5px;width:85px;height:39px;"><span class="sy">13895</span></div>
<div class="abs cell" style="left:345px;top:472.5px;width:89px;height:39px;"><span class="sy">6491</span></div>
<div class="abs cell" style="left:434px;top:470.5px;width:276px;height:39px;">世纪陆壹捌美妆形象设计店</div>
<div class="abs cell" style="left:710px;top:472.5px;width:224px;height:39px;"><span class="sy">FLL01389521020623</span></div>
<div class="abs cell" style="left:934px;top:472.5px;width:90px;height:39px;"><span class="sy">12.00</span></div>
<div class="abs cell" style="left:1024px;top:472.5px;width:110px;height:39px;"><span class="sy">2.10</span></div>
<div class="abs cell" style="left:1247px;top:470.5px;width:110px;height:39px;">无</div>
<div class="abs cell" style="left:1357px;top:472.5px;width:110px;height:39px;"><span class="sy">-</span></div>
<div class="abs cell" style="left:1601px;top:472.5px;width:219px;height:39px;"><span class="sy">2021-02-06 23:19:10</span></div>
<div class="abs cell" style="left:1134px;top:472.5px;width:113px;height:39px;"><span class="dot" style="background:#3498db"></span><span style="color:#3498db;position:relative;top:-2px">未支付</span></div>
<div class="abs cell" style="left:1467px;top:472.5px;width:134px;height:39px;"><span class="dot" style="background:#2c3e50"></span><span style="position:relative;top:-2px">直接支付</span></div>
<div class="abs" style="left:1844px;top:483px;width:22px;height:22px;background:#18bc9c;border-radius:3px"></div>
<svg class="abs" style="left:1849px;top:488px;" width="12" height="12" viewBox="0 0 13 13"><path d="M9.3 .8 L12.2 3.7 L4.4 11.5 L.9 12.3 L1.6 8.7Z" fill="#fff"/><path d="M1.9 9 L3.9 11" stroke="#18bc9c" stroke-width=".7"/><path d="M8.2 1.9 L11.1 4.8" stroke="#18bc9c" stroke-width=".8"/></svg>
<div class="abs cell" style="left:260px;top:511.5px;width:85px;height:39px;"><span class="sy">13894</span></div>
<div class="abs cell" style="left:345px;top:511.5px;width:89px;height:39px;"><span class="sy">6491</span></div>
<div class="abs cell" style="left:434px;top:509.5px;width:276px;height:39px;">世纪陆壹捌美妆形象设计店</div>
<div class="abs cell" style="left:710px;top:511.5px;width:224px;height:39px;"><span class="sy">FLL01389421020623</span></div>
<div class="abs cell" style="left:934px;top:511.5px;width:90px;height:39px;"><span class="sy">15.00</span></div>
<div class="abs cell" style="left:1024px;top:511.5px;width:110px;height:39px;"><span class="sy">5.10</span></div>
<div class="abs cell" style="left:1247px;top:509.5px;width:110px;height:39px;">无</div>
<div class="abs cell" style="left:1357px;top:511.5px;width:110px;height:39px;"><span class="sy">-</span></div>
<div class="abs cell" style="left:1601px;top:511.5px;width:219px;height:39px;"><span class="sy">2021-02-06 23:15:13</span></div>
<div class="abs cell" style="left:1134px;top:511.5px;width:113px;height:39px;"><span class="dot" style="background:#3498db"></span><span style="color:#3498db;position:relative;top:-2px">未支付</span></div>
<div class="abs cell" style="left:1467px;top:511.5px;width:134px;height:39px;"><span class="dot" style="background:#2c3e50"></span><span style="position:relative;top:-2px">直接支付</span></div>
<div class="abs" style="left:1844px;top:522px;width:22px;height:22px;background:#18bc9c;border-radius:3px"></div>
<svg class="abs" style="left:1849px;top:527px;" width="12" height="12" viewBox="0 0 13 13"><path d="M9.3 .8 L12.2 3.7 L4.4 11.5 L.9 12.3 L1.6 8.7Z" fill="#fff"/><path d="M1.9 9 L3.9 11" stroke="#18bc9c" stroke-width=".7"/><path d="M8.2 1.9 L11.1 4.8" stroke="#18bc9c" stroke-width=".8"/></svg>
<div class="abs cell" style="left:260px;top:550.5px;width:85px;height:39px;"><span class="sy">13893</span></div>
<div class="abs cell" style="left:345px;top:550.5px;width:89px;height:39px;"><span class="sy">6490</span></div>
<div class="abs cell" style="left:434px;top:548.5px;width:276px;height:39px;">世纪陆壹捌美妆形象设计店</div>
<div class="abs cell" style="left:710px;top:550.5px;width:224px;height:39px;"><span class="sy">FLL01389321020622</span></div>
<div class="abs cell" style="left:934px;top:550.5px;width:90px;height:39px;"><span class="sy">222.00</span></div>
<div class="abs cell" style="left:1024px;top:550.5px;width:110px;height:39px;"><span class="sy">222.00</span></div>
<div class="abs cell" style="left:1247px;top:548.5px;width:110px;height:39px;">无</div>
<div class="abs cell" style="left:1357px;top:550.5px;width:110px;height:39px;"><span class="sy">-</span></div>
<div class="abs cell" style="left:1601px;top:550.5px;width:219px;height:39px;"><span class="sy">2021-02-06 22:55:50</span></div>
<div class="abs cell" style="left:1134px;top:550.5px;width:113px;height:39px;"><span class="dot" style="background:#3498db"></span><span style="color:#3498db;position:relative;top:-2px">未支付</span></div>
<div class="abs cell" style="left:1467px;top:550.5px;width:134px;height:39px;"><span class="dot" style="background:#2c3e50"></span><span style="position:relative;top:-2px">直接支付</span></div>
<div class="abs" style="left:1844px;top:561px;width:22px;height:22px;background:#18bc9c;border-radius:3px"></div>
<svg class="abs" style="left:1849px;top:566px;" width="12" height="12" viewBox="0 0 13 13"><path d="M9.3 .8 L12.2 3.7 L4.4 11.5 L.9 12.3 L1.6 8.7Z" fill="#fff"/><path d="M1.9 9 L3.9 11" stroke="#18bc9c" stroke-width=".7"/><path d="M8.2 1.9 L11.1 4.8" stroke="#18bc9c" stroke-width=".8"/></svg>
<span class="abs ct" style="left:260px;top:610.3px;color:#333;white-space:nowrap">显示第 1 到第 10 条记录，总共 13868 条记录 每页显示</span>
<div class="abs" style="left:582px;top:604px;width:51px;height:31px;border:1px solid #ddd;background:#f4f4f4;border-radius:3px"></div>
<span class="abs ct" style="left:594.6px;top:611px;color:#333"><span class="sy" style="transform:scale(0.9,1.08)">10</span></span>
<svg class="abs" style="left:612px;top:618px;" width="8" height="4.2" viewBox="0 0 8 4.5"><path d="M0 4.5 H8 L4 0Z" fill="#333"/></svg>
<div class="abs" style="left:617px;top:813.5px;width:2px;height:2px;background:#e3a3ab;border-radius:1px"></div>
<span class="abs ct" style="left:636.5px;top:610.3px;color:#333">条记录</span>
<div class="abs" style="left:1510px;top:602px;width:380px;height:32px;border:1px solid #ddd;border-radius:3px;background:#fafafa;overflow:hidden"></div>
<div class="abs" style="left:1510.5px;top:610.3px;width:64px;line-height:15px;text-align:center;color:#555;white-space:nowrap">上一页</div>
<div class="abs" style="left:1574px;top:602px;width:33.5px;height:32px;background:#2c3e50"></div>
<div class="abs" style="left:1574.5px;top:610px;width:33px;line-height:15px;text-align:center;color:#fff;white-space:nowrap"><span class="sy">1</span></div>
<div class="abs" style="left:1607px;top:602px;width:1px;height:32px;background:#ddd"></div>
<div class="abs" style="left:1607.5px;top:610px;width:32px;line-height:15px;text-align:center;color:#555;white-space:nowrap"><span class="sy">2</span></div>
<div class="abs" style="left:1639px;top:602px;width:1px;height:32px;background:#ddd"></div>
<div class="abs" style="left:1639.5px;top:610px;width:32px;line-height:15px;text-align:center;color:#555;white-space:nowrap"><span class="sy">3</span></div>
<div class="abs" style="left:1671px;top:602px;width:1px;height:32px;background:#ddd"></div>
<div class="abs" style="left:1671.5px;top:610px;width:32px;line-height:15px;text-align:center;color:#555;white-space:nowrap"><span class="sy">4</span></div>
<div class="abs" style="left:1703px;top:602px;width:1px;height:32px;background:#ddd"></div>
<div class="abs" style="left:1703.5px;top:610px;width:32px;line-height:15px;text-align:center;color:#555;white-space:nowrap"><span class="sy">5</span></div>
<div class="abs" style="left:1735px;top:602px;width:1px;height:32px;background:#ddd"></div>
<div class="abs" style="left:1736px;top:603px;width:35px;height:30px;background:#fcfcfc"></div>
<div class="abs" style="left:1735.5px;top:610px;width:36px;line-height:15px;text-align:center;color:#555;white-space:nowrap">...</div>
<div class="abs" style="left:1771px;top:602px;width:1px;height:32px;background:#ddd"></div>
<div class="abs" style="left:1771.5px;top:610px;width:54px;line-height:15px;text-align:center;color:#555;white-space:nowrap"><span class="sy">1387</span></div>
<div class="abs" style="left:1825px;top:602px;width:1px;height:32px;background:#ddd"></div>
<div class="abs" style="left:1825.5px;top:610.3px;width:65px;line-height:15px;text-align:center;color:#555;white-space:nowrap">下一页</div>
</body></html>
